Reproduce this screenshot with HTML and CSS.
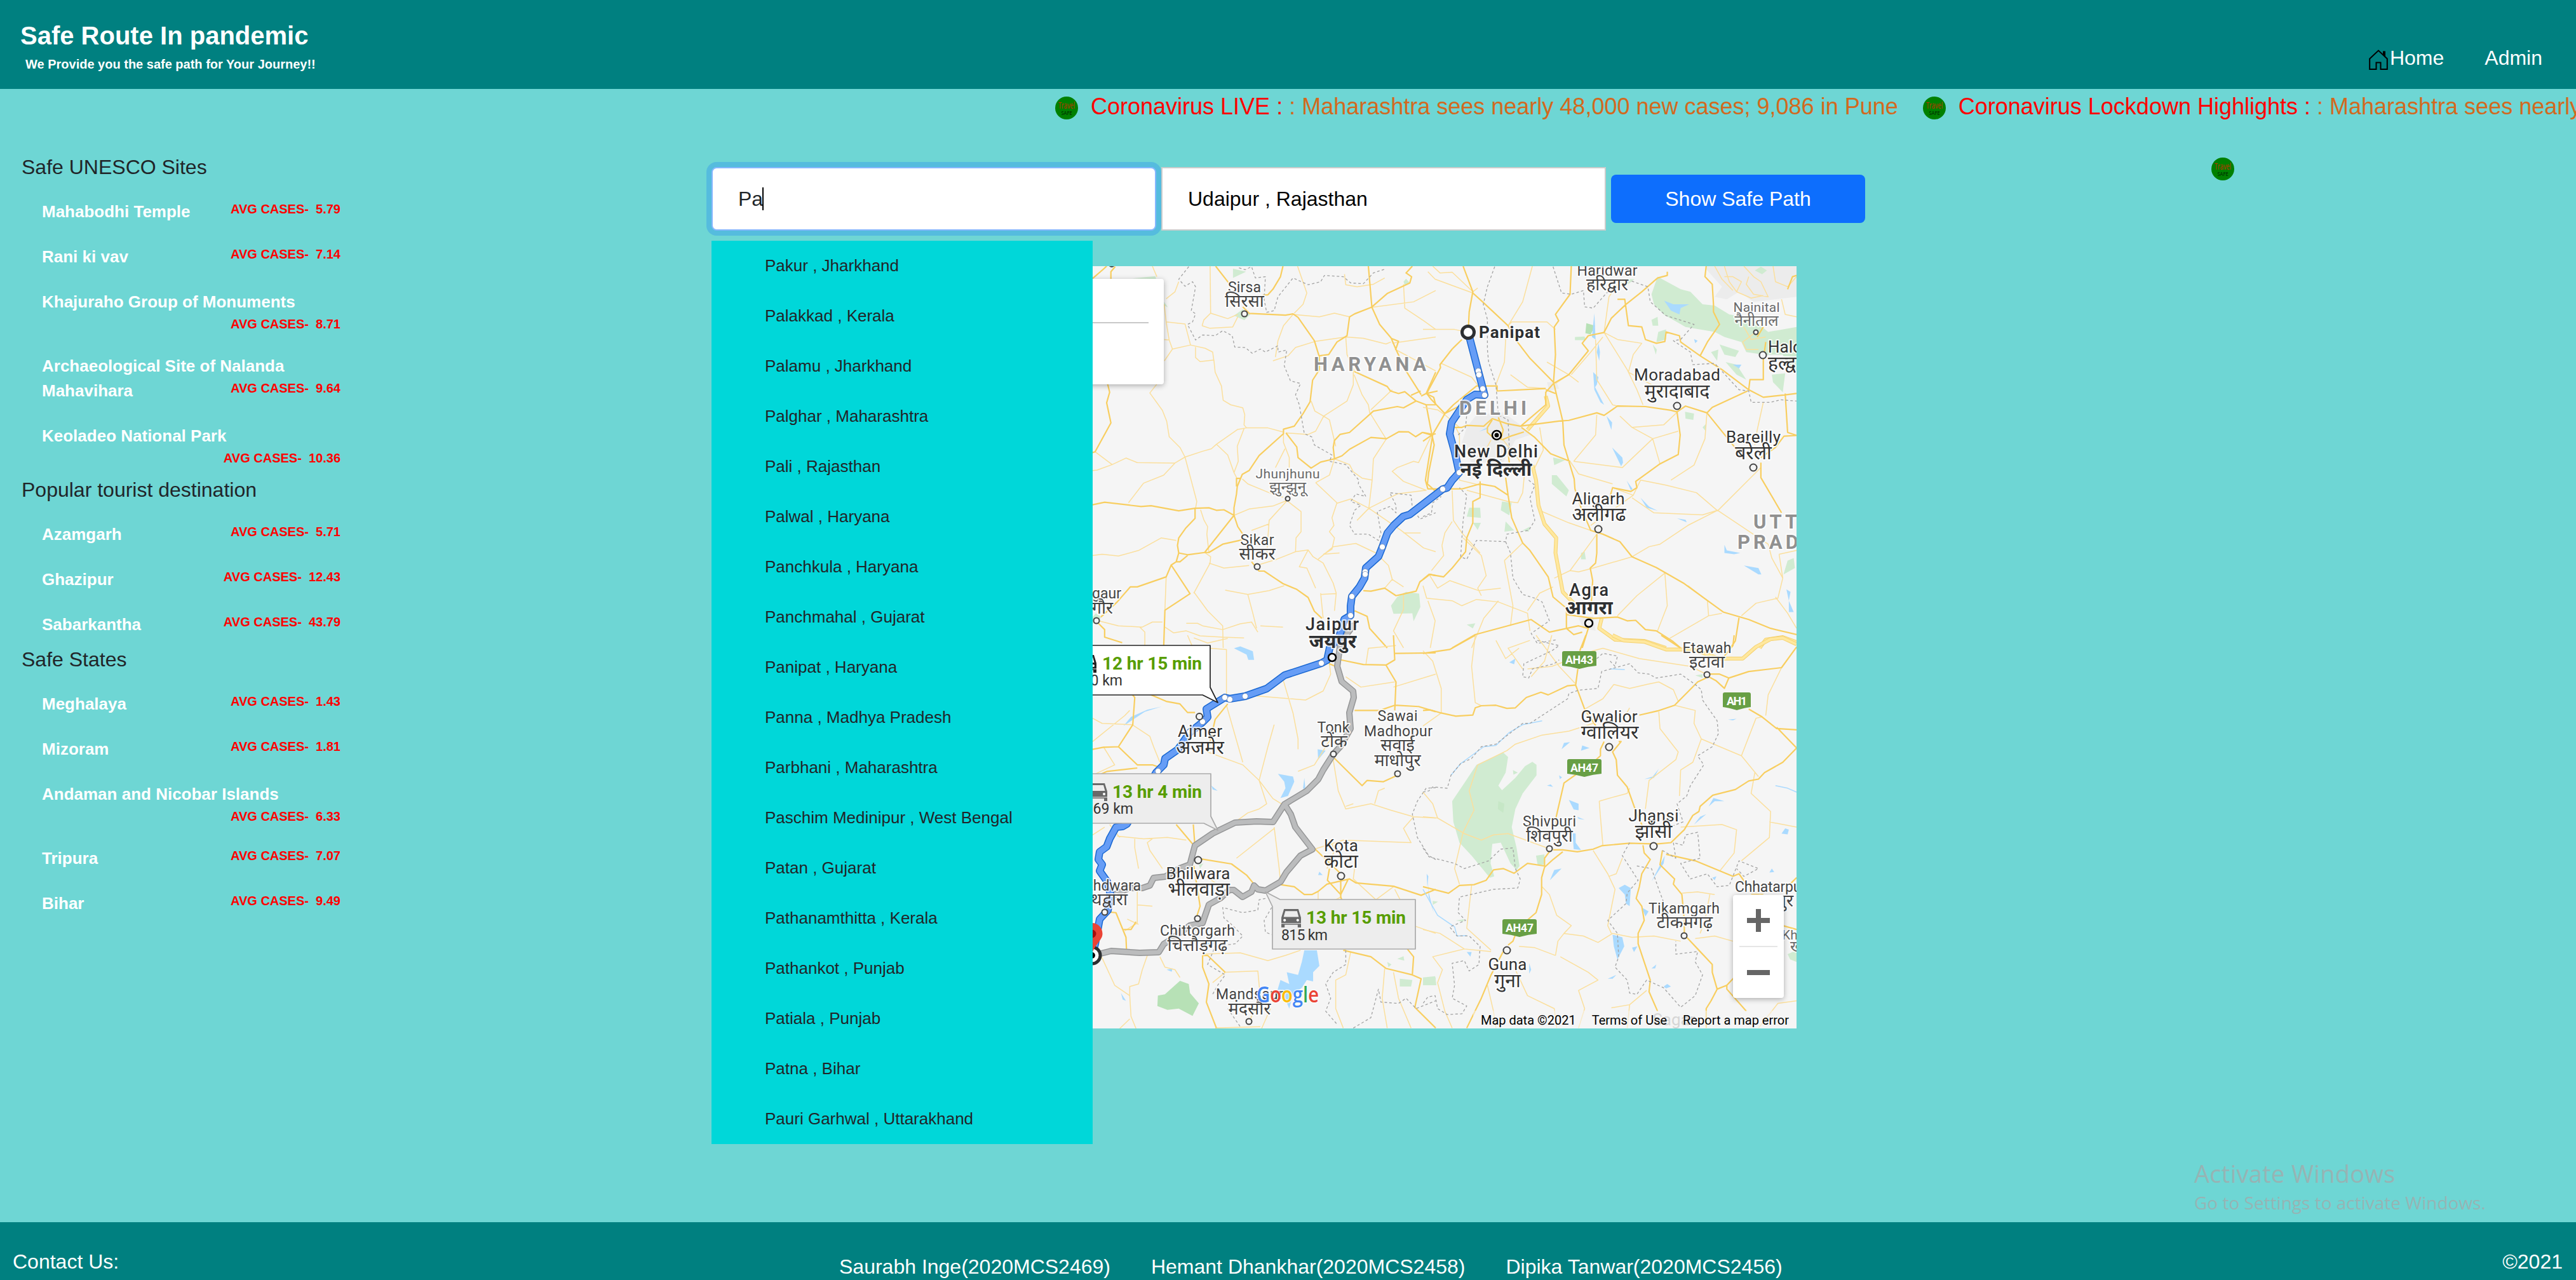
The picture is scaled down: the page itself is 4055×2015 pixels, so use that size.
FILE: index.html
```html
<!DOCTYPE html>
<html lang="en">
<head>
<meta charset="utf-8">
<title>Safe Route In pandemic</title>
<link rel="stylesheet" href="styles.css">
</head>
<body>
<svg width="0" height="0" class="defs">
  <symbol id="badge" viewBox="0 0 36 36">
    <circle cx="18" cy="18" r="18" fill="#008000"/>
    <text x="18" y="19" class="badge-travel" textLength="26" lengthAdjust="spacingAndGlyphs">Travel</text>
    <text x="18" y="29" class="badge-safe" textLength="17" lengthAdjust="spacingAndGlyphs">SAFE</text>
  </symbol>
  <symbol id="car" viewBox="0 0 32 28">
    <path fill-rule="evenodd" d="M5 0H27L31 13V28H26V24H6V28H1V13ZM7 3L4.500 12H27.500L25 3Z"/>
    <path d="M1 22H31" stroke="#ededed" stroke-width="1"/>
    <circle cx="6" cy="17" r="2" fill="#fff"/><circle cx="26" cy="17" r="2" fill="#fff"/>
  </symbol>
  <defs>
    <path id="alt" d="M2130 985L2110 1012L2105 1049L2112 1073L2130 1088L2131 1098L2124 1122L2126 1147L2110 1175L2099 1187L2083 1212L2075 1227L2057 1245L2022 1266L2004 1294L1978 1293L1944 1295L1909 1312L1881 1331L1873 1361L1857 1367L1834 1380L1816 1382L1810 1394L1798 1398L1778 1398L1759 1406L1749 1412M2022 1266L2032 1282L2039 1302L2066 1337L2047 1347L2025 1373L2016 1388L1992 1402L1980 1400L1974 1394L1970 1404L1956 1412L1942 1401L1935 1401L1921 1414L1903 1424L1893 1453L1873 1457L1842 1480L1832 1486L1824 1499L1794 1500L1749 1497L1721 1504"/>
    <path id="best" d="M2311 523L2327 584L2337 622L2322 621L2309 629L2297 647L2285 665L2282 683L2290 712L2297 744L2286 756L2278 768L2271 770L2219 810L2209 813L2194 827L2184 839L2176 861L2170 876L2150 894L2148 910L2140 924L2128 939L2126 954L2126 969L2116 975L2111 993L2107 1004L2093 1020L2089 1039L2080 1044L2022 1063L1994 1084L1960 1096L1936 1100L1928 1098L1899 1116L1901 1129L1893 1137L1873 1153L1854 1180L1834 1194L1832 1204L1820 1216L1774 1297L1767 1301L1757 1302L1747 1320L1742 1333L1731 1341L1729 1353L1735 1361L1731 1371L1743 1388L1748 1408L1744 1433L1731 1447L1724 1486L1719 1504"/>
  </defs>
</svg>

<header class="topbar">
  <div class="brand">
    <h1>Safe Route In pandemic</h1>
    <p>We Provide you the safe path for Your Journey!!</p>
  </div>
  <nav>
    <a class="home"><svg width="30" height="33" viewBox="0 0 30 33"><path d="M1.200 14.500L15 1.500L28.800 14.500V31H18.500V20.500H11.500V31H1.200Z" fill="none" stroke="#000" stroke-width="2"/><path d="M22 2.500H26V11.500L22 8Z"/></svg>Home</a>
    <a>Admin</a>
  </nav>
</header>

<div class="ticker">
  <svg class="badge"><use href="#badge"/></svg>
  <p><span>Coronavirus LIVE :</span> : Maharashtra sees nearly 48,000 new cases; 9,086 in Pune</p>
  <svg class="badge"><use href="#badge"/></svg>
  <p><span>Coronavirus Lockdown Highlights :</span> : Maharashtra sees nearly 48,000 new cases; 9,086 in Pune</p>
</div>

<main>
  <aside class="sidebar">
    <h2>Safe UNESCO Sites</h2>
    <ul>
      <li>Mahabodhi Temple <b>AVG CASES-&nbsp; 5.79</b></li>
      <li>Rani ki vav <b>AVG CASES-&nbsp; 7.14</b></li>
      <li>Khajuraho Group of Monuments <b>AVG CASES-&nbsp; 8.71</b></li>
      <li>Archaeological Site of Nalanda Mahavihara <b>AVG CASES-&nbsp; 9.64</b></li>
      <li>Keoladeo National Park <b>AVG CASES-&nbsp; 10.36</b></li>
    </ul>
    <h2>Popular tourist destination</h2>
    <ul>
      <li>Azamgarh <b>AVG CASES-&nbsp; 5.71</b></li>
      <li>Ghazipur <b>AVG CASES-&nbsp; 12.43</b></li>
      <li>Sabarkantha <b>AVG CASES-&nbsp; 43.79</b></li>
    </ul>
    <h2>Safe States</h2>
    <ul>
      <li>Meghalaya <b>AVG CASES-&nbsp; 1.43</b></li>
      <li>Mizoram <b>AVG CASES-&nbsp; 1.81</b></li>
      <li>Andaman and Nicobar Islands <b>AVG CASES-&nbsp; 6.33</b></li>
      <li>Tripura <b>AVG CASES-&nbsp; 7.07</b></li>
      <li>Bihar <b>AVG CASES-&nbsp; 9.49</b></li>
    </ul>
  </aside>

  <section class="planner">
    <div class="search">
      <div class="field focused">Pa<i class="caret"></i></div>
      <div class="field">Udaipur , Rajasthan</div>
      <button>Show Safe Path</button>
      <ul class="suggestions">
        <li>Pakur , Jharkhand</li><li>Palakkad , Kerala</li><li>Palamu , Jharkhand</li><li>Palghar , Maharashtra</li><li>Pali , Rajasthan</li><li>Palwal , Haryana</li><li>Panchkula , Haryana</li><li>Panchmahal , Gujarat</li><li>Panipat , Haryana</li><li>Panna , Madhya Pradesh</li><li>Parbhani , Maharashtra</li><li>Paschim Medinipur , West Bengal</li><li>Patan , Gujarat</li><li>Pathanamthitta , Kerala</li><li>Pathankot , Punjab</li><li>Patiala , Punjab</li><li>Patna , Bihar</li><li>Pauri Garhwal , Uttarakhand</li>
      </ul>
    </div>

    <div class="map">
      <svg class="tiles" width="1600" height="1200" viewBox="1228 419 1600 1200">
        <!-- north-west tile -->
        <g transform="translate(1640 400) scale(.3954)">
          <path class="park" d="M761 58L813 70L761 95ZM360 97L452 88L455 99ZM487 190L502 212L487 205ZM765 245L800 220L830 240L806 263ZM1390 1400L1415 1365L1450 1345L1502 1352L1507 1405L1480 1462L1475 1430L1400 1432ZM1440 110L1450 98L1465 115L1445 125ZM202 1445L215 1430L235 1445L225 1470H202Z"/>
          <path class="minor" d="M670 48L672 235M638 285L645 262L672 235L740 257L780 240M638 285L668 295L760 290L780 250M487 200L495 270L507 342M495 270L570 278L592 362L520 378L488 425M458 90L440 48M495 178L530 150L545 110M487 340L507 342L520 378M592 362L650 375L680 390L685 425M612 370V412L630 428L685 422L690 470L715 525L722 582L752 600L800 612L808 640L805 680L815 692L900 692L960 708M460 515L430 553L480 622L497 665L507 727L550 770L570 808L640 785L675 775L695 757L780 698L815 692M570 808L617 985L612 1012M212 787L280 838L335 812L380 830L530 832L570 808M202 862L220 860L280 838M530 832L485 880L405 912L345 990M632 1018L645 1058L660 1085L657 1115L665 1187M695 757L740 800L765 870L778 895M805 695L778 765L782 825L765 870M798 895L820 915L905 950L960 968M962 712V750L985 810V850M968 775L930 850M972 712L1060 718L1090 705L1122 645L1087 625L1072 585M1122 645L1145 660L1170 765M1122 645L1215 585L1240 520V465M1243 480L1275 560L1300 600L1305 630L1370 735"/>
          <path class="minor" d="M940 345L962 285L1000 240L1105 250L1165 235L1225 250M940 345L930 410M1087 348L1210 330L1280 335L1370 358L1390 350M920 425L980 405L1010 372L1087 348M1018 48L1055 155L1040 200L1005 235M1205 80L1210 122L1255 130L1320 120L1365 95M1314 212L1480 190L1568 145M1440 120L1445 215L1520 265L1568 300M1395 355L1568 330M1408 380L1568 465M1210 330L1215 400L1245 470M1310 620L1395 540M1372 735L1320 815L1315 900L1302 1010M1165 815L1225 838L1240 867L1275 892L1315 900M1550 725L1500 830L1480 825L1415 850L1395 865L1440 905L1530 940L1415 955L1302 1012L1230 975L1175 992M1090 910L1175 990L1155 1050L1163 1080L1145 1105L1165 1130L1155 1175L1122 1195M1090 910L1145 880L1165 815M765 1040L825 1015L920 1003L978 980L905 1060L900 1130L895 1210M903 1075L835 1100M980 985L1032 1025V1105L1012 1130L1010 1185L935 1215L870 1235M1302 1012L1430 1100L1520 1170L1568 1185M1302 1012L1255 1060M1508 1110H1440M665 1230L725 1250L825 1240M648 1188L672 1205L670 1230L605 1350M202 1200L240 1195L305 1202L385 1180L475 1130L535 1140M495 1285L490 1418M605 1345L660 1420L720 1480L722 1568M490 1485L525 1508L575 1500L630 1520L720 1525L805 1528M575 1470H620L640 1480L720 1495L790 1472L835 1465L860 1505M225 1460L305 1480L400 1485L440 1465H480M390 1485L410 1505V1560M730 1338L820 1355L905 1340L965 1320M820 1355L840 1430L855 1490M870 1480L960 1485M1010 1185L1060 1178L1080 1205L1120 1230L1160 1310L1172 1350L1165 1420M1120 1195L1185 1190M1100 1215L1160 1165L1250 1152L1330 1190M1060 1178L1025 1245L1055 1250L1090 1330M1110 1350L1120 1450M1110 1355L1170 1352M1365 1330L1395 1295L1440 1325M1440 1350V1415L1400 1500L1440 1568M1330 1190L1380 1240L1395 1295"/>
          <path class="road" d="M202 97L245 60L258 48M275 130V70L292 50M692 48L748 120M880 163L900 162L920 140L950 90L960 48M800 210L826 236L970 243L1000 238L1020 252L1085 345L1105 410V460L1078 502L1068 588L1040 635L1005 685L962 697V715L865 802L825 862L798 877L778 925L775 955L765 1010V1040L648 1188M775 925V893H790M1105 405L1142 400L1175 350L1215 325L1225 250L1245 238L1312 212L1375 157L1465 115L1472 90L1450 75L1475 48M1300 48L1314 212L1345 280L1390 333L1410 380L1450 465L1510 560M1390 335L1420 347L1408 382M1245 468L1375 527L1388 545L1420 555L1445 548L1490 585L1530 600H1568M1470 562L1508 545M1510 565L1530 555L1568 470M1530 555L1560 570L1568 600M1490 585L1440 612L1415 607L1320 625L1225 710L1187 718L1165 742L1160 770L1165 815L1110 828L1072 852L1020 810L1015 768L972 712M1165 815L1195 803L1225 777L1310 730L1372 735L1422 707L1460 708L1488 727L1515 710L1550 720L1568 715M1530 600L1552 715L1562 760L1540 870L1535 915L1568 945M202 998L250 988L395 1005L435 1002L545 1022L610 1012L665 1010L695 1020L725 1018L765 1040L780 1085L800 1115M610 1012V1052L572 1092L545 1130L540 1160L545 1190L580 1197L648 1188H665L720 1155L800 1137M545 1190L535 1225H550L580 1200M535 1225L515 1238L495 1285L380 1325H352L300 1385L235 1445M515 1238L590 1352L490 1418L485 1568M835 1225L865 1262H885L930 1292L960 1312L1015 1335L1060 1367L1085 1422L1115 1450M202 790L212 787L275 672L258 592L270 550L262 517M225 1470L250 1495V1525L320 1547M1280 1340L1310 1342L1365 1330L1410 1360L1490 1342L1505 1305L1545 1275L1568 1280M1245 1420L1295 1442L1305 1490L1375 1568"/>
          <path class="border" d="M585 50L545 100L570 128L600 110L612 130L595 225L612 238L600 270L580 280L612 342L640 322L690 325L720 305L758 325L768 370L810 372L838 395L870 378L890 390L940 365V390L975 382L965 445L990 505L1030 515L1010 560L1025 600L1045 715L1075 728L1085 760L1155 800L1145 825L1210 838L1262 900L1260 915L1290 965L1250 955L1230 985L1270 1000L1245 1020L1225 1080L1245 1115L1300 1115L1340 1140L1350 1110L1335 1025L1385 1005L1410 1030V1000L1385 950L1470 960L1475 1010L1505 1055L1568 1030M785 55L810 62L835 50L850 95L890 90L885 180L895 232L925 225L940 170L1000 95L1060 122L1110 110L1125 85L1200 90L1230 115L1280 118L1320 75L1365 60"/>
        </g>
        <!-- north-east tile -->
        <g transform="translate(2240 400) scale(.38265 .3954)">
          <path class="urban" d="M180 690L220 640L330 630L400 680L440 720L380 740L330 830L200 830L160 750ZM1165 60L1230 130L1200 170L1250 180L1300 150L1360 190L1537 170V48H1165ZM640 1450L700 1440L710 1500L660 1490ZM510 510L550 510L560 535L520 545Z"/>
          <path class="park" d="M940 160L965 90L1060 140L1100 150L1150 200L1200 205L1260 240L1350 255L1420 310L1537 290V470L1500 440L1480 400L1400 400L1330 390L1310 350L1240 330L1200 310L1080 290L990 240L950 200ZM625 330L665 328L668 343L625 343ZM940 262L965 250L968 285L945 285ZM968 310L1000 300V340L960 350ZM1185 390L1215 380L1210 425ZM1220 360L1300 385L1285 410L1240 400ZM1245 430L1290 440L1330 500L1290 480ZM1435 480L1490 475L1480 550L1440 510ZM1078 628L1115 635L1112 660L1080 655ZM1150 690L1165 675L1163 705ZM535 810L585 820L540 840ZM530 880L550 880L600 940L590 965L530 915ZM325 985L365 990L355 1040L320 1020ZM190 1010L235 1010L238 1050L180 1045ZM205 1070L238 1070L225 1098ZM340 1065L375 1100L335 1105ZM650 1190L665 1185L670 1215L650 1215ZM1500 1220L1525 1210L1530 1250L1483 1275ZM1365 65L1390 50L1415 65L1395 80ZM800 100H870L830 130ZM410 1100L440 1085L435 1105ZM180 1475L215 1470L205 1490ZM945 360L962 380L958 400Z"/>
          <path class="park2" d="M672 275L708 285L690 320L668 315Z"/>
          <path class="water" d="M992 185L1030 200L1095 200L1060 215L1055 240L1020 225ZM705 235L710 340L695 330ZM722 355L728 390L725 425L715 390ZM700 470L722 490L715 520L708 530L745 600L730 590L705 540ZM755 645L778 670L775 700ZM778 770L820 810L823 830L815 845ZM895 970L930 1005L965 1022L920 1010ZM838 902L862 935L855 940ZM1045 1052L1080 1058L1085 1068ZM1240 1158L1250 1180L1305 1190L1280 1195L1240 1190ZM1320 1240L1380 1250L1392 1275H1380ZM1495 1335L1512 1345L1505 1380ZM1505 1380L1525 1425H1505ZM1275 440H1310L1300 455ZM1115 338L1130 345L1120 355ZM230 707L265 690L262 697Z"/>
          <path class="minor" d="M40 48L70 75L120 72L205 150M20 70L50 100L205 155M0 300H130L187 312M380 340L350 285L365 270L510 270L545 300M450 48L410 190L350 285M330 300L340 340L335 430L300 520L305 545M75 435L200 490L240 540M205 150L225 135M800 120L765 170L745 312L840 460L880 540L905 600M745 312L800 340L900 355L865 400L845 470L960 530L1020 560M710 340L715 500L780 600L800 605M610 480L690 390L740 330M715 640L710 720L620 825M810 645L860 690L945 735L1050 705M945 735L975 835M860 690L990 680L1045 630M945 735L820 850L620 825M605 825L640 875L780 915M780 930L865 960L690 1080M865 960L895 900L1000 920L1125 950L1212 1022L1390 850M860 970L950 1030L1150 1038L1212 1020L1420 1155L1435 1210L1480 1290M1212 1020L1090 1080L975 1155L930 1165L860 1205L700 1250M1168 632L1160 735L1115 840L1020 900M1400 590L1375 700L1365 760M1380 380H1330L1315 350L1370 310M490 1025L600 1070L690 1100M715 1115L605 1260L540 1290M605 1260L640 1265L700 1250M995 1270L1005 1400L965 1500M995 1270L880 1360L800 1440M1090 1320L1170 1380L1175 1440L1015 1530M1175 1440L1230 1430M135 690L150 720L150 900L235 920M280 740L200 880M330 740L420 850L410 950L390 990L350 985L180 940M480 690L495 780L460 850M120 940L125 1060L160 1110L235 1190M78 1160L90 1110L120 1065M78 1160L85 1200L35 1260M165 1130L240 1200L260 1280L225 1330L240 1360M335 1220L370 1400L360 1480M335 1220L410 1150M25 1275L60 1330L110 1300L230 1340L320 1330M0 1320L15 1370L120 1380L160 1400L220 1375L310 1385L430 1430L440 1500M310 1380L250 1450L200 1568M20 1380L50 1460L30 1568M1465 1195L1480 1290L1460 1370L1370 1390L1310 1440M1537 1180L1465 1195M1450 1365L1500 1430L1537 1490M0 610L60 620L90 640L150 690M235 540L160 600M600 480L640 510M510 430L600 480L545 515M430 1420L480 1350L535 1325M360 480L430 530L505 535M1240 48L1260 110L1290 150L1310 110L1275 90L1240 90M1320 48L1360 90L1390 110L1420 170L1360 160L1330 120L1340 90M1440 48L1450 110L1500 130L1537 90M1290 150L1350 175L1400 165M1200 48L1230 100L1275 145M1320 290L1350 340L1410 330M1475 180L1490 240L1537 250"/>
          <path class="expressway-edge" d="M450 840L465 900L475 1000L500 1075L548 1130L545 1190L575 1345L620 1390M735 1450L725 1490L790 1535L910 1540L1000 1568M1385 1568L1410 1535L1480 1525L1537 1545M505 565L515 605L430 700"/>
          <path class="expressway" d="M450 840L465 900L475 1000L500 1075L548 1130L545 1190L575 1345L620 1390M735 1450L725 1490L790 1535L910 1540L1000 1568M1385 1568L1410 1535L1480 1525L1537 1545M505 565L515 605L430 700"/>
          <path class="road" d="M165 48L205 150L190 230L187 290M205 155L245 190L350 285L390 352L440 415L537 510M160 340L120 378L70 440L72 452L15 555L35 580L90 635L160 600M0 710L40 718L90 635L125 600L220 525H305V545L505 535M15 555L60 545M40 718L0 745M40 718L10 900L20 935L160 935M610 48L605 160L545 240L558 265L540 290L545 400L537 510L575 665L580 760L622 895L625 935L650 1010M965 95L900 150L835 200L775 255L745 312L680 325L655 355L680 385L600 480L537 515L505 550V600L402 685M800 180L830 180L845 285L900 290L915 340L960 355L995 348L1000 310L1055 325L1060 350L1140 405L1230 460L1340 540L1400 570L1495 560L1537 555M965 95L1005 85V70M1140 405L1170 350L1220 280L1195 230V200L1190 120L1160 90L1165 48M1400 420V500H1345L1340 540M1490 555L1500 710L1537 722L1485 725L1450 770L1390 810M130 690L160 690L180 682L250 685L285 655L345 675L400 685L440 680L560 665L600 662L715 632L745 642L800 605L915 607L1020 622L1045 628L1080 605L1168 632L1190 610L1335 545M1168 632L1240 718L1300 790M1045 628L1058 720L1050 798L975 835L875 905L880 930L855 945L780 930L765 980M1390 830V890L1475 1030M405 690L460 730L525 795L605 825M300 740L265 710V690L285 660M325 740L360 725L415 708M310 650L330 700L320 740M350 790L355 830M235 905V970L205 985V1070L180 1130L175 1185L120 1250L85 1285L25 1275L0 1295M160 935L235 915L295 925L350 960L365 1050L410 1150L440 1180L515 1285L535 1365L590 1410V1490L620 1515L655 1505M340 890L350 960M505 540L545 555M715 1115V1190L710 1230L688 1250L698 1300L690 1430M650 1010L690 1100L740 1115L810 1145L860 1205L960 1248L1075 1312L1235 1425L1340 1455L1430 1490L1537 1515M590 1435L700 1450L800 1445L840 1460L875 1458L915 1495L960 1500L1025 1540L1060 1568M1300 1448L1285 1540L1265 1568M120 1568L215 1515L445 1455L520 1505L640 1480L680 1490L655 1568M1400 290L1375 330M1500 140L1520 90L1537 85M1400 420L1410 350"/>
          <path class="border" d="M295 50L265 130L248 200L265 260V380L270 430L300 520L310 640L350 660L355 770L320 820M535 50L570 155L610 160L660 145L665 210L700 215L755 155L850 105L925 130L935 190L1000 245L1115 280L1060 340L1030 345L1100 390L1110 440L1200 435L1300 540L1340 545L1350 590L1430 590L1470 580L1537 585M145 720L175 690L180 640M435 900L460 920L440 970L460 1060L435 1100L345 1115L340 1145L220 1140L180 1215L155 1205L165 1060L180 960L150 930M340 1145L360 1190L370 1290L410 1355L460 1370L490 1385L520 1460L445 1510L470 1550L550 1535M0 1045L35 1030L40 990L75 965"/>
        </g>
        <!-- south-west tile -->
        <g transform="translate(1640 1000) scale(.3954 .40816)">
          <path class="park2" d="M490 1385L550 1333L585 1345L590 1380L625 1420L600 1468L545 1440L500 1445L460 1430L462 1390Z"/>
          <path class="park" d="M1425 1325L1475 1330L1470 1355H1425ZM1518 1325L1568 1320V1345L1518 1350ZM625 885L643 880L630 900ZM1415 1248L1440 1238L1443 1255ZM1375 1260L1392 1270L1380 1280Z"/>
          <path class="water" d="M765 50L790 43L840 62L845 95H822L815 75ZM477 275L410 295L325 350L355 315L420 287ZM940 535L1000 545L1005 565L980 620L950 628L970 590L965 565ZM1045 550L1050 600L1040 590ZM1098 440L1130 445L1100 480ZM1045 1215L1095 1215L1105 1275L1080 1300V1335L1055 1330L1035 1360L1000 1385L985 1440L970 1405L930 1395L950 1330L985 1345L975 1300L1020 1310L1035 1260ZM1535 925L1540 990L1560 1070L1540 1010ZM497 1290L520 1285L517 1298ZM315 1380L335 1410L322 1405ZM1105 912L1118 925H1100ZM675 580L700 600L680 595ZM640 1190L690 1170L680 1200Z"/>
          <path class="minor" d="M580 0L600 45L735 55V240M605 10L660 30L740 12M1145 110L1150 150L1120 215L1050 250L830 232M960 170L1000 300L1020 400V440M735 270L800 490M1020 525L1085 500L1130 430L1170 370M925 345L900 430L865 560L895 650L865 670L820 685L770 720M865 560L800 500L660 450M865 560L920 630L970 660M1160 480L1180 600L1210 670L1310 650L1390 675L1480 700M1210 660L1240 650M1325 650L1340 600L1365 590M1480 700L1568 705M1480 700L1440 745L1470 800L1200 790L1085 825M925 740L945 900L950 950M775 860L925 745M440 785L420 800L430 830L480 900M300 775L405 785L500 780L575 790M370 785V820L385 900M202 320L240 340L360 345L430 390L445 430L470 490M202 410L330 310L350 290M335 200L250 180M245 430L290 500L202 540M250 740L202 770M270 730L310 780M380 985V1110L330 1140M380 1040L440 1045M340 1095L385 1115M1150 790L1165 830L1135 900M1250 860L1240 940L1330 1020L1400 970M1100 990V1110L1085 1180M1190 1010L1090 1060L1020 1080M1405 980L1480 1120L1568 1150M202 1180L240 1245L290 1350L350 1390L355 1470L375 1517M350 1480L310 1517M350 1390L350 1355L385 1345L400 1290L420 1235M470 1240L490 1280L530 1290L550 1320M640 1230L790 1225L900 1255L970 1235L1030 1215M730 1300L860 1295L870 1400L830 1480M730 1300L680 1340M1230 1220L1210 1310L1170 1330V1440L1200 1515M1365 1285L1355 1400L1375 1515M1400 1300L1420 1400L1470 1515M875 1517L910 1440M690 1515L870 1510M1210 160L1270 200L1405 180M1400 200L1568 150M1290 115L1300 50L1410 40M1080 0L1110 40M1205 1215L1270 1160L1405 1120L1480 1125M600 900L700 960"/>
          <path class="road" d="M335 200L370 240L362 345L305 430L380 500L440 500L470 510M202 440L245 432L305 430M375 205L495 255L550 265L580 298H610M202 550L260 525L380 512M660 450L690 325L740 265M1190 95L1280 113L1370 115L1405 95L1400 0M1370 115L1410 180L1405 290M1245 290L1345 290L1405 270L1500 275L1568 295M1405 70L1568 68M1160 470L1275 580L1295 560L1360 565L1415 540M630 862L755 882L815 925L845 960M603 730L610 820M535 730L600 805M605 890L630 1045L615 1090M950 962L1005 970L1045 1000L1075 1000L1100 988L1135 960L1225 940L1250 955L1400 968L1510 1003L1568 980M1085 822L1190 920V1010L1210 1060L1225 1100M1145 900L1137 945L1190 1000L1220 940M640 1235H660L730 1300M640 1235V1280L665 1345L655 1415L695 1515M270 1068L295 1070L335 1165L337 1212M325 1135H355L375 1105M1200 1215L1310 1240L1370 1285L1475 1310L1510 1325L1485 1435L1568 1515M1475 1310L1480 1240L1455 1210M1165 118L1145 110L1140 50"/>
          <path class="border" d="M1568 588L1530 590L1495 640L1475 690L1495 780L1540 850L1568 865M890 1015L865 1020L860 1060L800 1070L720 1050L725 1090L760 1120L800 1160L770 1190L690 1200L660 1270L730 1310L700 1350L680 1385M915 1050L885 1100L890 1145L915 1155M1210 1215V1270L1160 1300L1130 1345L1150 1400L1130 1450L1175 1500M1240 1515L1310 1475L1340 1365L1350 1415L1420 1420L1450 1400L1490 1440L1568 1410M740 1440L790 1510"/>
        </g>
        <!-- south-east tile -->
        <g transform="translate(2240 1000) scale(.38265 .40816)">
          <path class="park" d="M120 640L170 570L220 500L330 452L350 470L340 530L310 580L325 598L380 550L420 505L450 488L467 500V540L410 610L380 670L365 740L385 820L397 890L385 905L360 880L320 800L285 805L278 880L293 930L275 935L200 850L150 800L125 720ZM465 850L500 845L497 885L472 888ZM0 1320L50 1315L55 1350H0ZM1500 1230L1537 1215V1260L1510 1250ZM40 1025L62 1028L40 1040ZM1120 155L1150 150V165ZM370 520L390 530L372 538ZM135 1100L170 1095L165 1105Z"/>
          <path class="park2" opacity=".4" d="M310 640L335 650L330 685L308 670Z"/>
          <path class="water" d="M570 440L580 415L605 412ZM650 445L655 425L685 435ZM910 555L945 545L970 515L950 550ZM600 635L640 650V675L620 672ZM615 762L628 765V800L650 828L620 825ZM805 975L830 962L855 975L850 1045L835 1035L830 1000ZM780 1155L820 1165L828 1200L800 1250L785 1200ZM522 945L540 905L570 900ZM1175 660L1195 628L1240 640L1285 640L1200 640ZM1475 765L1490 745L1505 750L1500 768ZM940 950L995 850L990 880ZM900 1050L928 1065L915 1085ZM1115 730L1140 700L1165 690ZM560 540L572 548L563 555ZM510 580L525 575L535 585ZM355 105L380 90L375 112ZM180 1222H200L195 1240ZM437 1265L445 1290L437 1305ZM990 1355L1005 1345L1020 1355L1000 1362ZM760 1325L795 1310L780 1325ZM1255 325L1290 322L1275 328ZM1425 915L1435 900L1445 913ZM860 1205L882 1200L868 1222ZM15 920L22 930L18 970ZM635 700L665 712L640 708ZM1190 935L1207 930L1200 945ZM940 1285L960 1270L955 1285Z"/>
          <path class="river" d="M115 540L155 495L250 430L300 425L355 375L410 345L490 330M770 130L830 132M0 980L60 1080L130 1125L140 1160L180 1158M1450 580L1500 590L1537 605"/>
          <path class="minor" d="M0 60L40 100L75 205V300M215 0L200 120L215 260L240 272M395 50L340 90L300 20M410 130L350 50L440 20M465 0L560 120L625 185M530 0L500 100L445 160M430 130L530 120L700 60L740 50L890 90L1100 120L1165 150M0 350L75 300M970 295L975 360L1050 450L1040 480L930 560L915 670M665 285L740 245L785 190L850 205L920 190L970 180L1030 210L1050 255M1035 270L1120 290L1115 340L1145 400L1110 490L1060 520L1055 620M1145 400L1310 465L1380 545M1310 465L1370 320L1395 315M1475 125L1420 230L1410 310M225 500L345 445L380 420L490 385L600 370L700 340M225 500L190 600L210 675L165 760L130 900L150 960M0 700L60 705L170 765L240 790L290 770L350 765L510 820M725 640L730 700L740 810M725 640L780 625L840 610L850 590M700 830L760 920L790 980L760 1120L775 1150M765 930L795 920L820 860M490 970L520 1000L550 1080L610 1120L580 1150L660 1160L720 1185L780 1150L860 1165L950 1160L1060 1180M545 1235L555 1180L580 1150M395 1200L460 1205L545 1235M280 1220L170 1210L40 1240L80 1290L60 1340L90 1450L120 1515M0 1135L70 1150L170 1210M200 965L180 1130L280 1215M565 1240L680 1300L720 1330L640 1370L665 1440L640 1515M380 1290L430 1390L540 1440L550 1515M265 1350L290 1450L300 1515M775 1437L850 1425L920 1370M850 1425L840 1515M1065 995L1130 990L1200 1000M1060 740L1230 730L1290 750L1280 840L1220 910M1365 530L1350 610L1430 680L1425 780L1310 870M1140 1150L1160 1100L1180 1000M0 605L40 650L60 705M1425 720L1537 740M1120 1170L1200 1160L1275 1180M820 330L850 280M1380 1515L1460 1420L1537 1410"/>
          <path class="expressway-edge" d="M780 0L825 20L910 25L1000 55L1110 55L1220 90L1315 90L1370 45L1430 15L1480 10L1537 35"/>
          <path class="expressway" d="M780 0L825 20L910 25L1000 55L1110 55L1220 90L1315 90L1370 45L1430 15L1480 10L1537 35"/>
          <path class="road" d="M0 70L110 55L215 0M0 290L30 288L75 300L135 312L205 308L215 280L240 272L300 270L345 282L380 280L425 240L485 220L515 230L595 195L628 192L637 130M670 0L645 60M628 192L665 285L715 355M745 410L730 440L730 465L700 490L580 570L548 700V740M1537 365L1455 360L1395 315L1340 285M1455 355L1537 435L1480 490L1405 530L1380 555L1340 562L1285 595L1192 617L1140 660L1135 680L1110 695L1075 750L1020 800L960 805M890 308L965 292L1035 270L1130 180L1165 165M1180 150L1220 150L1258 165L1340 140L1475 125L1537 45M1175 160L1205 175L1240 205L1258 165M980 0L1060 50M1280 0L1275 40L1240 80M805 410L815 410L780 450L795 480L800 540L840 585L880 690L905 740M535 828L575 828L635 835L700 825L735 812L850 802L960 805M520 835L500 860V890L430 880L375 918L330 900L290 905L260 945L210 962L150 965L105 995L0 970M575 835L535 865L500 895L488 935V1000L465 1070L390 1130L370 1180L350 1195M330 1220L280 1310L240 1400L180 1515M905 810L910 840L935 865L900 920L890 970L877 1015L900 1045L910 1100L885 1150V1190L910 1260L935 1330L930 1375L965 1450M985 830L975 885L1035 940L1030 960L1065 1000L1075 1100V1150M1085 1165L1130 1210L1190 1270V1300L1210 1365L1185 1410L1165 1440V1515M1000 845L1120 870L1275 930L1300 920L1330 960M1210 1365L1250 1350L1290 1310M1250 1350V1365L1330 1450M1350 1000H1400M1537 935L1510 960M1537 1135L1480 1120"/>
          <path class="border" d="M0 605L25 600L40 585L100 590L115 540L155 495L200 475L240 430L300 420L355 380L410 340L440 340L595 245L600 225L640 212L720 205L735 140L850 110L885 145L930 150L960 165L1060 150L1120 190L1145 210L1150 250L1210 330L1215 380L1190 430L1130 465L1155 500L1100 580L1085 620L1045 650L1070 720L1000 745M470 20L560 40L530 60L415 110L410 160L435 165L450 130L540 110L560 95M715 90L740 70L800 80L790 120L770 100M0 820L25 855L130 880L170 900L270 870L320 825L370 820L380 900L400 940L390 975L290 980L150 1010L145 1070L175 1100L110 1125L140 1160L190 1160L235 1200L230 1270L190 1295L170 1255L120 1265L130 1350L120 1400L180 1430L160 1460L100 1463L60 1440L50 1390L20 1395L0 1420M850 800L820 850L885 945L840 995L835 1035L760 1100L800 1150L805 1240L790 1280L840 1330L850 1380L880 1385L920 1330L990 1360L1060 1435L1120 1390L1150 1310L1120 1260L1130 1220L1040 1230V1180M880 890L940 900L970 980L990 1030M985 830L1040 860L1030 800L1070 810L1080 770L1130 760L1140 860L1060 880L1100 940L1170 920L1210 970L1260 965L1300 870L1380 900L1320 930L1290 900"/>
        </g>

        <!-- alternative and suggested routes -->
        <g class="route">
          <use href="#alt" stroke="#949596" stroke-width="10"/><use href="#alt" stroke="#bbbcbd" stroke-width="7"/>
          <use href="#best" stroke="#1967d2" stroke-width="12"/><use href="#best" stroke="#669df6" stroke-width="9"/>
        </g>
        <g class="steps"><circle cx="2327" cy="584" r="4.500"/><circle cx="2328" cy="590" r="4.500"/><circle cx="2334" cy="612" r="4.500"/><circle cx="2337" cy="622" r="4.500"/><circle cx="2297" cy="744" r="4.500"/><circle cx="2271" cy="770" r="4.500"/><circle cx="2158" cy="861" r="4.500" display="none"/><circle cx="2176" cy="861" r="4.500"/><circle cx="2149" cy="900" r="4.500"/><circle cx="2149" cy="904" r="4.500"/><circle cx="2128" cy="939" r="4.500"/><circle cx="2126" cy="969" r="4.500"/><circle cx="2080" cy="1044" r="4.500"/><circle cx="1960" cy="1096" r="4.500"/><circle cx="1936" cy="1101" r="4.500"/><circle cx="1928" cy="1098" r="4.500"/><circle cx="1893" cy="1136" r="4.500"/><circle cx="1873" cy="1152" r="4.500"/><circle cx="1823" cy="1214" r="4.500"/></g>

        <g class="towns">
          <circle cx="1959" cy="494" r="4.500"/><circle cx="2027" cy="785" r="3.500"/><circle cx="1979" cy="892" r="4.500"/><circle cx="1726" cy="977" r="4.500"/><circle cx="2764" cy="523" r="3.500"/><circle cx="2775" cy="559" r="5.500"/><circle cx="2640" cy="639" r="5.500"/><circle cx="2760" cy="736" r="5.500"/><circle cx="2516" cy="833" r="5.500"/><circle cx="2687" cy="1062" r="4.500"/><circle cx="2533" cy="1176" r="5.500"/><circle cx="2439" cy="1336" r="4.500"/><circle cx="2603" cy="1332" r="5.500"/><circle cx="2651" cy="1473" r="4.500"/><circle cx="2372" cy="1496" r="5.500"/><circle cx="1888" cy="1128" r="5"/><circle cx="2099" cy="1187" r="4.500"/><circle cx="2200" cy="1218" r="4.500"/><circle cx="2111" cy="1379" r="5.500"/><circle cx="1886" cy="1354" r="5.500"/><circle cx="1739" cy="1436" r="4.500"/><circle cx="1885" cy="1446" r="4.500"/><circle cx="1966" cy="1608" r="4.500"/><circle cx="1750" cy="416" r="4"/>
          <g stroke="#000" stroke-width="2.500"><circle cx="2097" cy="1035" r="6"/><circle cx="2501" cy="981" r="6"/><circle cx="2356" cy="685" r="7"/></g>
          <circle cx="2356" cy="685" r="3.500" class="solid"/>
        </g>

        <g class="label small">
          <text x="1959" y="460" textLength="52">Sirsa</text><text lang="hi" x="1959" y="483">सिरसा</text>
          <text x="1979" y="858" textLength="53">Sikar</text><text lang="hi" x="1979" y="881">सीकर</text>
          <text x="1765" y="942" class="end">Nagaur</text><text lang="hi" x="1752" y="966" class="end">नागौर</text>
          <text x="2530" y="434" textLength="95">Haridwar</text><text lang="hi" x="2530" y="457">हरिद्वार</text>
          <text x="2687" y="1028" textLength="77">Etawah</text><text lang="hi" x="2687" y="1051">इटावा</text>
          <text x="2439" y="1301" textLength="84">Shivpuri</text><text lang="hi" x="2439" y="1325">शिवपुरी</text>
          <text x="2731" y="1404" class="start" textLength="112">Chhatarpur</text><text lang="hi" x="2823" y="1427" class="end">छतरपुर</text>
          <text x="2651" y="1438" textLength="112">Tikamgarh</text><text lang="hi" x="2652" y="1461">टीकमगढ़</text>
          <text x="2099" y="1153" textLength="51">Tonk</text><text lang="hi" x="2100" y="1176">टोंक</text>
          <text x="2200" y="1135" textLength="63">Sawai</text><text x="2201" y="1159" textLength="108">Madhopur</text><text lang="hi" x="2200" y="1182">सवाई</text><text lang="hi" x="2200" y="1206">माधोपुर</text>
          <text x="1796" y="1402" class="end">Nathdwara</text><text lang="hi" x="1775" y="1425" class="end">नाथद्वारा</text>
          <text x="1885" y="1473" textLength="118">Chittorgarh</text><text lang="hi" x="1885" y="1497">चित्तौड़गढ़</text>
          <text x="1967" y="1573" textLength="106">Mandsaur</text><text lang="hi" x="1967" y="1597">मंदसौर</text>
        </g>
        <g class="label tiny">
          <text x="2027" y="753" textLength="101">Jhunjhunu</text><text lang="hi" x="2027" y="775">झुन्झुनू</text>
          <text x="2765" y="491" textLength="73">Nainital</text><text lang="hi" x="2765" y="513">नैनीताल</text>
          <text x="2805" y="1479" class="start">Khajuraho</text><text lang="hi" x="2818" y="1498" class="start">खजुराहो</text>
        </g>
        <g class="label city">
          <text x="2640" y="599" textLength="136">Moradabad</text><text lang="hi" x="2640" y="626">मुरादाबाद</text>
          <text x="2783" y="555" class="start">Haldwani</text><text lang="hi" x="2783" y="582" class="start">हल्द्वानी</text>
          <text x="2760" y="697" textLength="86">Bareilly</text><text lang="hi" x="2760" y="723">बरेली</text>
          <text x="2516" y="794" textLength="83">Aligarh</text><text lang="hi" x="2517" y="820">अलीगढ</text>
          <text x="2533" y="1137" textLength="89">Gwalior</text><text lang="hi" x="2534" y="1163">ग्वालियर</text>
          <text x="2603" y="1293" textLength="79">Jhansi</text><text lang="hi" x="2603" y="1319">झाँसी</text>
          <text x="2373" y="1527" textLength="61">Guna</text><text lang="hi" x="2373" y="1554">गुना</text>
          <text x="1889" y="1160" textLength="70">Ajmer</text><text lang="hi" x="1889" y="1187">अजमेर</text>
          <text x="2111" y="1340" textLength="54">Kota</text><text lang="hi" x="2111" y="1366">कोटा</text>
          <text x="1886" y="1384" textLength="101">Bhilwara</text><text lang="hi" x="1887" y="1410">भीलवाड़ा</text>
        </g>
        <g class="label big">
          <text x="2097" y="992" textLength="84">Jaipur</text><text lang="hi" x="2098" y="1020">जयपुर</text>
          <text x="2355" y="720" textLength="132">New Delhi</text><text lang="hi" x="2355" y="749">नई दिल्ली</text>
          <text x="2501" y="938" textLength="62">Agra</text><text lang="hi" x="2501" y="967">आगरा</text>
          <text x="2328" y="532" class="start strong" textLength="96">Panipat</text>
        </g>
        <g class="label state">
          <text x="2068" y="584" textLength="182">HARYANA</text><text x="2297" y="653" textLength="111">DELHI</text>
          <text x="2760" y="832">UTTAR</text><text x="2735" y="864">PRADESH</text>
        </g>

        <g class="shield">
          <path d="M2462 1025H2510Q2513 1025 2513 1028V1048Q2500 1049 2486 1053Q2472 1049 2459 1048V1028Q2459 1025 2462 1025ZM2470 1195H2518Q2521 1195 2521 1198V1218Q2508 1219 2494 1223Q2480 1219 2467 1218V1198Q2467 1195 2470 1195ZM2368 1447H2416Q2419 1447 2419 1450V1470Q2406 1471 2392 1475Q2378 1471 2365 1470V1450Q2365 1447 2368 1447ZM2715 1090H2753Q2756 1090 2756 1093V1113Q2747 1114 2734 1118Q2721 1114 2712 1113V1093Q2712 1090 2715 1090Z"/>
          <text x="2486" y="1045" textLength="44">AH43</text><text x="2494" y="1215" textLength="44">AH47</text><text x="2392" y="1467" textLength="44">AH47</text><text x="2734" y="1110" textLength="32">AH1</text>
        </g>

        <!-- route end points -->
        <circle cx="2311" cy="523" r="9.500" class="endpoint"/>
        <circle cx="1719" cy="1504" r="13" class="endpoint"/><circle cx="1719" cy="1504" r="5"/>
        <path d="M1719 1453C1729 1453 1735.500 1461 1735.500 1470C1735.500 1480 1723 1487 1719 1502C1715 1487 1702 1480 1702 1470C1702 1461 1709 1453 1719 1453Z" fill="#ea4335"/><circle cx="1719" cy="1470" r="6.500" fill="#a50e0e"/>

        <g class="callout">
          <path class="active" d="M1680 1016H1905V1082L1917 1106L1893 1094H1680Z"/>
          <path d="M1680 1218H1906V1285L1917 1307L1895 1296H1680ZM1992 1404L2015 1416H2228V1494H2003V1427Z"/>
          <use href="#car" x="1695" y="1031" width="32" height="28" fill="#222"/>
          <use href="#car" x="1712" y="1233" width="32" height="28" fill="#696969"/>
          <use href="#car" x="2016" y="1431" width="33" height="29" fill="#696969"/>
          <text class="time" x="1735" y="1054" textLength="157">12 hr 15 min</text><text class="dist" x="1767" y="1079" text-anchor="end">750 km</text>
          <text class="time" x="1751" y="1256" textLength="141">13 hr 4 min</text><text class="dist" x="1784" y="1281" text-anchor="end">769 km</text>
          <text class="time" x="2056" y="1454" textLength="157">13 hr 15 min</text><text class="dist" x="2017" y="1480" textLength="73">815 km</text>
        </g>
        <text class="faded" x="2635" y="1614">Sagar</text>
        <text class="google" x="1978" y="1578" textLength="98" lengthAdjust="spacingAndGlyphs"><tspan fill="#4285f4">G</tspan><tspan fill="#ea4335">o</tspan><tspan fill="#fbbc05">o</tspan><tspan fill="#4285f4">g</tspan><tspan fill="#34a853">l</tspan><tspan fill="#ea4335">e</tspan></text>
      </svg>
      <div class="map-card"><hr></div>
      <div class="zoom"><svg width="80" height="162"><path d="M22 40H58M40 22V58M22 122H58" stroke="#666" stroke-width="8"/><path d="M10 81H70" stroke="#e6e6e6" stroke-width="2"/></svg></div>
      <div class="credits"><span>Map data ©2021</span><span>Terms of Use</span><span>Report a map error</span></div>
    </div>
  </section>

  <div class="side-badge"><svg class="badge"><use href="#badge"/></svg></div>
</main>

<footer>
  <span>Contact Us:</span>
  <div class="authors"><span>Saurabh Inge(2020MCS2469)</span><span>Hemant Dhankhar(2020MCS2458)</span><span>Dipika Tanwar(2020MCS2456)</span></div>
  <span>©2021</span>
</footer>

<div class="watermark"><p>Activate Windows</p><small>Go to Settings to activate Windows.</small></div>
</body>
</html>
```
FILE: styles.css
```css
* { box-sizing: border-box; }
body { margin: 0; width: 4055px; height: 2015px; overflow: hidden; background: #6ed6d4; font: 32px/1.5 "Liberation Sans", Arial, sans-serif; color: #212529; display: flex; flex-direction: column; }
h1, h2, p, ul { margin: 0; padding: 0; }
ul { list-style: none; }
.defs { position: absolute; }
.badge { width: 36px; height: 36px; flex: none; display: block; }
.badge-travel { font: 14px "Open Sans", sans-serif; fill: #c03000; text-anchor: middle; }
.badge-safe { font: 600 9px "Open Sans", sans-serif; fill: #003800; text-anchor: middle; }

.topbar { height: 140px; flex: none; background: #008080; color: #fff; display: flex; justify-content: space-between; padding: 32px 53px 0 32px; }
.brand h1 { font-size: 40px; line-height: 48px; font-weight: 700; }
.brand p { font-size: 20px; line-height: 30px; font-weight: 700; padding: 6px 0 0 8px; }
nav { display: flex; gap: 64px; padding-top: 35px; line-height: 48px; }
.home { display: flex; gap: 3px; }
.home svg { margin-top: 11px; }

.ticker { height: 54px; flex: none; display: flex; align-items: flex-start; overflow: hidden; padding-left: 1661px; font-size: 36px; color: #d2691e; white-space: nowrap; }
.ticker .badge { margin-top: 12px; }
.ticker p { margin: 1px 39px 0 20px; line-height: 53px; flex: none; }
.ticker span { color: #f00; }

main { height: 1730px; flex: none; display: grid; grid-template-columns: 1120px 1816px 1fr; }
.sidebar { width: 536px; padding: 50px 0 0 34px; }
.sidebar h2 { font-size: 32px; line-height: 38px; font-weight: 400; margin-bottom: 32px; }
.sidebar ul { padding-left: 32px; margin-bottom: 16px; display: flex; flex-direction: column; gap: 32px; }
.sidebar li { display: flow-root; font-size: 26px; line-height: 39px; font-weight: 700; color: #fff; }
.sidebar b { float: right; font-size: 20px; line-height: 30px; color: #f00; }

.planner { padding-top: 69px; }
.search { position: relative; display: flex; gap: 8px; align-items: center; height: 100px; }
.field { width: 700px; height: 100px; background: #fff; border: 2px solid #ccc; padding: 0 40px; display: flex; align-items: center; color: #000; }
.field.focused { border-color: #86b7fe; border-radius: 8px; box-shadow: 0 0 0 8px rgba(13, 110, 253, .25); color: #212529; }
.caret { width: 2px; height: 36px; margin-left: -1px; background: #000; }
button { width: 400px; height: 76px; border: 0; border-radius: 8px; background: #0d6efd; color: #fff; font: inherit; padding: 0; }
.suggestions { position: absolute; z-index: 2; left: 0; top: 116px; width: 600px; background: #00d7d9; font-size: 26px; line-height: 79px; }
.suggestions li { padding-left: 84px; }

.map { position: relative; width: 1600px; height: 1200px; margin: 56px 0 0 108px; background: #f5f5f5; overflow: hidden; font-family: Roboto, sans-serif; }
.tiles { display: block; font-family: Roboto, "Noto Sans Devanagari", "Noto Sans", sans-serif; }
.tiles path { stroke-linejoin: round; vector-effect: non-scaling-stroke; }
.minor, .road, .border, .river, .expressway, .expressway-edge { fill: none; }
.minor { stroke: #fbdf9c; stroke-width: 1.500px; }
.road { stroke: #f8ce60; stroke-width: 2.200px; }
.expressway-edge { stroke: #f5d271; stroke-width: 6px; }
.expressway { stroke: #ffe89e; stroke-width: 4px; }
.border { stroke: #a2a2a2; stroke-width: 1.300px; stroke-dasharray: 4 3.500; }
.river { stroke: #aadaff; stroke-width: 1.500px; }
.park { fill: #d0ebd1; }
.park2 { fill: #b7e1b6; }
.urban { fill: #ececec; }
.water { fill: #aadaff; }
.route { fill: none; stroke-linecap: round; stroke-linejoin: round; }
.steps { fill: #fff; stroke: #5c7299; stroke-width: 1px; stroke-opacity: .6; }
.towns { fill: #f5f5f5; stroke: #444; stroke-width: 2px; }
.towns .solid { fill: #000; stroke: none; }
.label { text-anchor: middle; paint-order: stroke; stroke: rgba(255, 255, 255, .8); stroke-width: 4px; stroke-linejoin: round; }
.label .start { text-anchor: start; }
.label .end { text-anchor: end; }
.small { font-size: 23px; fill: #444; }
.small :lang(hi) { font-size: 27px; }
.tiny { font-size: 21px; fill: #696969; }
.tiny :lang(hi) { font-size: 24px; }
.city { font-size: 26px; fill: #333; }
.city :lang(hi) { font-size: 30px; }
.big { font-size: 27px; font-weight: 500; fill: #2d2f31; }
.big :lang(hi) { font-size: 30px; font-weight: 700; }
.strong { font-weight: 700; font-size: 26px; }
.state { font-size: 31px; font-weight: 700; fill: #909090; text-anchor: start; letter-spacing: 5px; }
.shield path { fill: #689f45; }
.shield text { fill: #fff; font-size: 18px; font-weight: 700; text-anchor: middle; }
.endpoint { fill: #fff; stroke: #2d2f31; stroke-width: 5px; }
.callout > path { fill: #ededed; stroke: #aaa; stroke-width: 1.700px; }
.callout .active { fill: #fff; stroke: #222; }
.time { font-size: 28px; font-weight: 700; fill: #579d00; }
.dist { font-size: 23px; fill: #333; }
.google { font: 600 34px "Open Sans", sans-serif; paint-order: stroke; stroke: rgba(255, 255, 255, .7); stroke-width: 3px; }
.faded { fill: #b5b5b5; font-size: 26px; text-anchor: middle; }
.map-card { position: absolute; left: 20px; top: 20px; width: 584px; height: 166px; background: #fff; border-radius: 4px; box-shadow: 0 2px 8px rgba(0, 0, 0, .3); }
.map-card hr { margin: 68px 24px 0; border: 0; height: 2px; background: #c8c8c8; }
.zoom { position: absolute; right: 20px; bottom: 48px; width: 80px; height: 162px; background: #fff; border-radius: 4px; box-shadow: 0 2px 8px rgba(0, 0, 0, .3); }
.credits { position: absolute; right: 0; bottom: 0; height: 28px; padding: 1px 12px 0; display: flex; gap: 25px; font-size: 20px; line-height: 28px; color: #000; background: rgba(245, 245, 245, .5); }

.side-badge { padding: 54px 0 0 545px; }

footer { position: relative; flex: 1; background: #008080; color: #fff; display: flex; justify-content: space-between; padding: 38px 21px 0 20px; line-height: 48px; white-space: nowrap; }
.authors { position: absolute; left: 1321px; top: 46px; display: flex; gap: 64px; }

.watermark { position: absolute; left: 3454px; top: 1820px; color: #96b4b4; font-family: "Open Sans", sans-serif; white-space: nowrap; }
.watermark p { font-size: 38px; line-height: 54px; letter-spacing: .3px; }
.watermark small { display: block; font-size: 28px; line-height: 38px; }
```
